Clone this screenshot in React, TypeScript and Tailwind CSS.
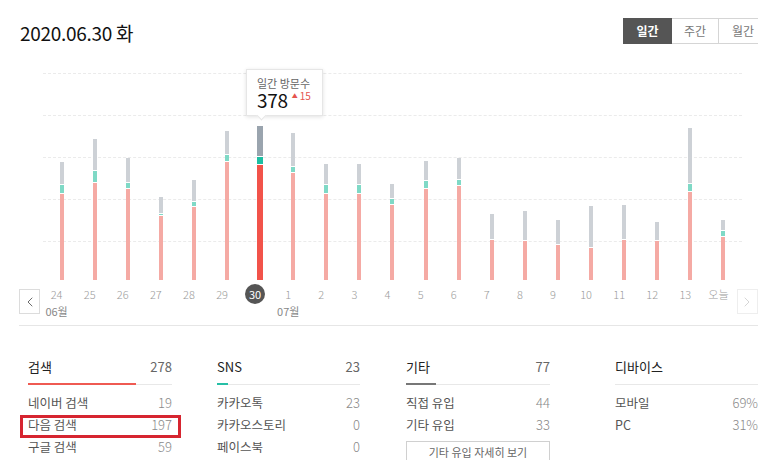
import React from 'react';
import { ChevronLeft, ChevronRight } from 'lucide-react';

const BASE = 278;

// g = top of gray part, t = top of teal part, r = top of red part (page y)
const days = [
  { d: '24', m: '06월', g: 160, t: 183, r: 192 },
  { d: '25', g: 137, t: 169, r: 181 },
  { d: '26', g: 156, t: 181, r: 187 },
  { d: '27', g: 195, t: 212, r: 214 },
  { d: '28', g: 178, t: 200, r: 205 },
  { d: '29', g: 129, t: 153, r: 160 },
  { d: '30', g: 124, t: 155, r: 163, active: true },
  { d: '1', m: '07월', g: 131, t: 165, r: 171 },
  { d: '2', g: 162, t: 183, r: 192 },
  { d: '3', g: 162, t: 183, r: 192 },
  { d: '4', g: 182, t: 197, r: 203 },
  { d: '5', g: 159, t: 179, r: 187 },
  { d: '6', g: 156, t: 178, r: 184 },
  { d: '7', g: 211, t: 237, r: 238 },
  { d: '8', g: 208, t: 238, r: 239 },
  { d: '9', g: 217, t: 242, r: 243 },
  { d: '10', g: 203, t: 245, r: 246 },
  { d: '11', g: 202, t: 237, r: 238 },
  { d: '12', g: 219, t: 238, r: 239 },
  { d: '13', g: 126, t: 182, r: 190 },
  { d: '오늘', g: 218, t: 229, r: 235 },
];

type Row = { label: string; value: string };
type Section = { title: string; total?: string; bar?: string; barW?: number; rows: Row[] };

const sections: Section[] = [
  {
    title: '검색',
    total: '278',
    bar: 'bg-[#ef5a52]',
    barW: 108,
    rows: [
      { label: '네이버 검색', value: '19' },
      { label: '다음 검색', value: '197' },
      { label: '구글 검색', value: '59' },
    ],
  },
  {
    title: 'SNS',
    total: '23',
    bar: 'bg-[#26bfa6]',
    barW: 11,
    rows: [
      { label: '카카오톡', value: '23' },
      { label: '카카오스토리', value: '0' },
      { label: '페이스북', value: '0' },
    ],
  },
  {
    title: '기타',
    total: '77',
    bar: 'bg-[#777777]',
    barW: 30,
    rows: [
      { label: '직접 유입', value: '44' },
      { label: '기타 유입', value: '33' },
    ],
  },
  {
    title: '디바이스',
    rows: [
      { label: '모바일', value: '69%' },
      { label: 'PC', value: '31%' },
    ],
  },
];

const colClass = ['ml-[28px] w-[144px]', 'ml-[45px] w-[143px]', 'ml-[46px] w-[144px]', 'ml-[65px] w-[143px]'];

function Bar({ g, t, r, active }: { g: number; t: number; r: number; active?: boolean }) {
  const segs = [
    { h: t - g - 1, c: active ? 'bg-[#9aa4ae]' : 'bg-[#cdd1d6]' },
    { h: r - t - 1, c: active ? 'bg-[#1dbfa3]' : 'bg-[#7fd9c6]' },
    { h: BASE - r, c: active ? 'bg-[#f2534a]' : 'bg-[#f5aaa4]' },
  ].filter(s => s.h > 0);
  return (
    <div className={`flex flex-col gap-px ${active ? 'w-[6px]' : 'w-[4px]'}`}>
      {segs.map((s, i) => (
        <div key={i} className={s.c} style={{ height: s.h }} />
      ))}
    </div>
  );
}

export default function App() {
  return (
    <div className="w-[758px] h-[460px] overflow-hidden bg-white font-['Noto_Sans_CJK_KR','Noto_Sans',sans-serif] text-[#333]">
      {/* Header */}
      <div className="w-[768px] pl-[20px] pt-[18px] flex items-start">
        <h1 className="mt-[2px] text-[19px] leading-[26px] text-[#111] tracking-[-0.3px]">2020.06.30 화</h1>
        <div className="ml-auto flex h-[26px] text-[12px]">
          <button className="w-[49px] h-full bg-[#555555] text-white font-bold">일간</button>
          <button className="w-[47px] h-full border-y border-r border-[#d5d5d5] text-[#777]">주간</button>
          <button className="w-[49px] h-full border-y border-r border-[#d5d5d5] text-[#777]">월간</button>
        </div>
      </div>

      {/* Chart */}
      <div className="relative mt-[16px] h-[218px]">
        <div className="absolute left-[43px] top-[11px] w-[699px] flex flex-col gap-[41px]">
          {[0, 1, 2, 3, 4].map(i => (
            <div key={i} className="h-0 border-t border-dashed border-[#ebebeb]" />
          ))}
        </div>
        <div className="relative ml-[45px] h-full flex">
          {days.map(day => (
            <div key={day.d} className="w-[33.1px] h-full flex flex-col items-center justify-end">
              <Bar g={day.g} t={day.t} r={day.r} active={day.active} />
            </div>
          ))}
        </div>
        {/* Tooltip */}
        <div className="absolute left-[246px] top-[7px] w-[77px] h-[47px] bg-white border border-[#e6e6e6] shadow-[0_1px_4px_rgba(0,0,0,0.12)] pl-[10px] pt-[6px]">
          <div className="text-[11px] leading-[14px] text-[#666]">일간 방문수</div>
          <div className="flex items-start h-[20px] leading-[20px]">
            <span className="text-[19px] text-[#111] tracking-[-0.3px]">378</span>
            <span className="ml-[4px] text-[10px] leading-[12px] text-[#e5554e] flex items-center gap-[2px]">
              <span className="text-[6px]">▲</span>15
            </span>
          </div>
          <div className="absolute left-[11px] bottom-[-4px] w-[7px] h-[7px] bg-white rotate-45 border-r border-b border-[#e6e6e6]" />
        </div>
      </div>

      {/* Axis */}
      <div className="mt-[4px] flex items-start">
        <button className="ml-[19px] mt-[5px] w-[26px] h-[25px] border border-[#dcdcdc] flex items-center justify-center text-[#555]">
          <ChevronLeft size={16} strokeWidth={1.3} />
        </button>
        <div className="flex">
          {days.map(day => (
            <div key={day.d} className="w-[33.1px] flex flex-col items-center">
              <div className="h-[20px] flex items-center justify-center">
                {day.active ? (
                  <span className="w-[20px] h-[20px] rounded-full bg-[#555555] text-white text-[11px] flex items-center justify-center">
                    {day.d}
                  </span>
                ) : (
                  <span className="text-[11px] text-[#9a9a9a] font-light">{day.d}</span>
                )}
              </div>
              <div className="h-[14px] text-[11px] leading-[14px] text-[#888] whitespace-nowrap">{day.m ?? ''}</div>
            </div>
          ))}
        </div>
        <button className="ml-[2px] mt-[5px] w-[26px] h-[25px] border border-[#eeeeee] flex items-center justify-center text-[#d0d0d0]">
          <ChevronRight size={16} strokeWidth={1.3} />
        </button>
      </div>

      <div className="ml-[19px] mt-[7px] border-t border-[#e6e6e6]" />

      {/* Inflow sections */}
      <div className="flex mt-[31px]">
        {sections.map((s, idx) => (
          <div key={s.title} className={colClass[idx]}>
            <div className="h-[20px] flex items-center justify-between text-[13px]">
              <span className="text-[#222]">{s.title}</span>
              {s.total && <span className="text-[#666]">{s.total}</span>}
            </div>
            <div className="relative mt-[7px] h-px bg-[#e8e8e8]">
              {s.bar && <div className={`absolute left-0 bottom-0 h-[2px] ${s.bar}`} style={{ width: s.barW }} />}
            </div>
            <div className="mt-[7px]">
              {s.rows.map(row => (
                <div key={row.label} className="relative h-[22px] flex items-center justify-between text-[12.5px]">
                  <span className="text-[#555]">{row.label}</span>
                  <span className="text-[13px] text-[#8a8a8a] font-light">{row.value}</span>
                  {row.label === '다음 검색' && (
                    <div className="absolute left-[-8px] right-[-9px] top-[1px] h-[23px] border-[3px] border-[#d62530]" />
                  )}
                </div>
              ))}
              {s.title === '기타' && (
                <button className="mt-[5px] w-full h-[22px] border border-[#d0d0d0] text-[11px] leading-[20px] text-[#666]">
                  기타 유입 자세히 보기
                </button>
              )}
            </div>
          </div>
        ))}
      </div>
    </div>
  );
}
